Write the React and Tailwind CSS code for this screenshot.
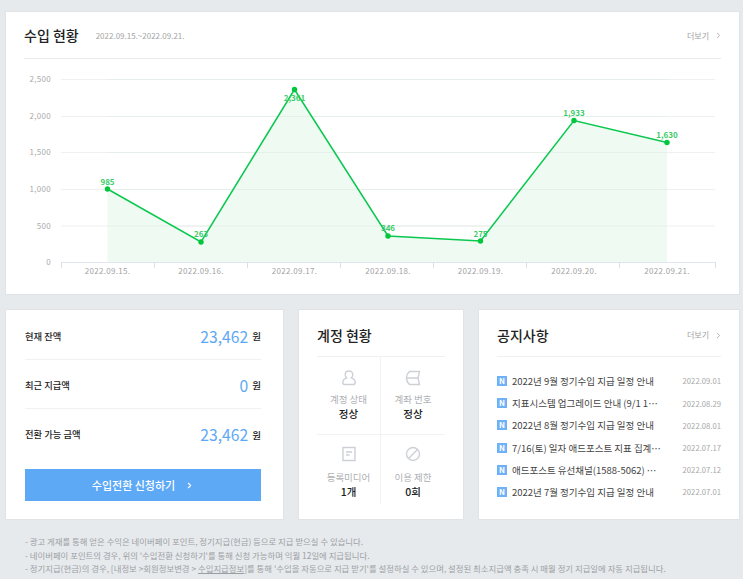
import { ChevronRight } from "lucide-react";

const font = "font-['Noto_Sans_CJK_KR','Noto_Sans',sans-serif]";

// Weekly revenue points, positions are in chart pixels
const points = [
  { x: 46.5, y: 128, label: "985", date: "2022.09.15.", ly: 124 },
  { x: 140, y: 181, label: "263", date: "2022.09.16.", ly: 176 },
  { x: 233.5, y: 28.5, label: "2,361", date: "2022.09.17.", ly: 40 },
  { x: 327, y: 175, label: "346", date: "2022.09.18.", ly: 170 },
  { x: 419.5, y: 180, label: "275", date: "2022.09.19.", ly: 176 },
  { x: 513, y: 59.5, label: "1,933", date: "2022.09.20.", ly: 55 },
  { x: 606, y: 81.5, label: "1,630", date: "2022.09.21.", ly: 77 },
];

const yTicks = [
  { y: 18, label: "2,500" },
  { y: 55, label: "2,000" },
  { y: 91, label: "1,500" },
  { y: 128, label: "1,000" },
  { y: 164.5, label: "500" },
  { y: 201, label: "0" },
];

const xTicks = [0, 93, 186, 279, 372, 465, 558, 654];

const balances = [
  { label: "현재 잔액", value: "23,462" },
  { label: "최근 지급액", value: "0" },
  { label: "전환 가능 금액", value: "23,462" },
];

const notices = [
  { title: "2022년 9월 정기수입 지급 일정 안내", date: "2022.09.01" },
  { title: "지표시스템 업그레이드 안내 (9/1 15시 ~ 17시)", date: "2022.08.29" },
  { title: "2022년 8월 정기수입 지급 일정 안내", date: "2022.08.01" },
  { title: "7/16(토) 일자 애드포스트 지표 집계 지연 안내", date: "2022.07.17" },
  { title: "애드포스트 유선채널(1588-5062) 운영 종료 안내", date: "2022.07.12" },
  { title: "2022년 7월 정기수입 지급 일정 안내", date: "2022.07.01" },
];

function RevenueChart() {
  const line = points.map((p) => `${p.x},${p.y}`).join(" ");
  const area = `46.5,201 ${line} 606,201`;
  return (
    <svg width="697" height="224" viewBox="-37 0 697 224" className="block">
      {yTicks.map((t) => (
        <g key={t.label}>
          {t.label !== "0" && (
            <line x1="0" x2="654" y1={t.y + 0.5} y2={t.y + 0.5} stroke="#eef0f2" />
          )}
          <text x="-10" y={t.y + 3} textAnchor="end" fontSize="8" fill="#aaaaaa" letterSpacing="0.3">
            {t.label}
          </text>
        </g>
      ))}
      <polygon points={area} fill="#effaf2" />
      {yTicks.slice(0, 5).map((t) => (
        <line key={t.y} x1="46.5" x2="606" y1={t.y + 0.5} y2={t.y + 0.5} stroke="#e6efe9" />
      ))}
      <line x1="0" x2="654" y1="201.5" y2="201.5" stroke="#dfe6f2" />
      {xTicks.map((x) => (
        <line key={x} x1={x + 0.5} x2={x + 0.5} y1="201" y2="207" stroke="#d9e0ec" />
      ))}
      <polyline points={line} fill="none" stroke="#0ac84f" strokeWidth="1.5" />
      {points.map((p) => (
        <g key={p.date}>
          <circle cx={p.x} cy={p.y} r="2.7" fill="#00c73c" />
          <text x={p.x} y={p.ly} textAnchor="middle" fontSize="8" fontWeight="700" fill="#3dcb6a">
            {p.label}
          </text>
          <text x={p.x} y="213" textAnchor="middle" fontSize="8" fill="#a3a3a3" letterSpacing="0.3">
            {p.date}
          </text>
        </g>
      ))}
    </svg>
  );
}

function MoreLink() {
  return (
    <div className="flex items-center gap-[5px] text-[8px] text-[#a2a2a2]">
      더보기
      <ChevronRight size={9} strokeWidth={2} className="-mr-[2px] text-[#999999]" />
    </div>
  );
}

function StatCell({ icon, label, value, className, labelGap }) {
  return (
    <div className={`flex flex-col items-center ${className}`}>
      <div className="flex h-[16px] items-center">{icon}</div>
      <div className={`${labelGap} text-[9.5px] leading-[14px] text-[#aeb0b3]`}>{label}</div>
      <div className="text-[10.5px] leading-[16px] font-medium text-[#222222]">{value}</div>
    </div>
  );
}

const iconProps = {
  width: 16,
  height: 16,
  viewBox: "0 0 16 16",
  fill: "none",
  stroke: "#cdd1d6",
  strokeWidth: 1.4,
};

export default function App() {
  return (
    <div className={`${font} h-[579px] w-[743px] overflow-hidden bg-[#e7eaed] pt-[11px] pl-[5px]`}>
      <section className="h-[284px] w-[735px] border border-[#e1e4e7] bg-white px-[18px]">
        <div className="flex h-[47px] items-center justify-between border-b border-[#e9ebee] pt-px">
          <div className="flex items-center">
            <h2 className="text-[14px] font-medium text-[#222222]">수입 현황</h2>
            <span className="ml-[17px] text-[8px] text-[#a5a5a5]">2022.09.15.~2022.09.21.</span>
          </div>
          <MoreLink />
        </div>
        <div className="mt-[2px]">
          <RevenueChart />
        </div>
      </section>

      <div className="mt-[14px] flex gap-[14px]">
        <section className="h-[211px] w-[279px] border border-[#e1e4e7] bg-white pr-[22px] pl-[19px]">
          {balances.map((b, i) => (
            <div
              key={b.label}
              className={`flex h-[49px] items-center justify-between pt-[3px] ${i < 2 ? "border-b border-[#f0f1f3]" : ""} ${i === 0 ? "mt-[1px]" : ""}`}
            >
              <span className="text-[9.3px] font-medium text-[#222222]">{b.label}</span>
              <span className="flex items-center gap-[4px]">
                <span className="text-[15.7px] text-[#5ea8f5]">{b.value}</span>
                <span className="text-[9.5px] font-medium text-[#222222]">원</span>
              </span>
            </div>
          ))}
          <div className="mt-[11px] flex h-[32px] items-center justify-center gap-[10px] bg-[#5da9f6] text-[11px] font-medium text-white">
            수입전환 신청하기
            <ChevronRight size={9} strokeWidth={3} />
          </div>
        </section>

        <section className="h-[211px] w-[166px] border border-[#e1e4e7] bg-white px-[18px]">
          <h2 className="flex h-[47px] items-center border-b border-[#eef0f2] pt-[5px] text-[14px] font-medium text-[#222222]">
            계정 현황
          </h2>
          <div className="grid h-[147px] grid-cols-2 grid-rows-[78px_69px]">
            <StatCell
              className="border-r border-b border-[#f1f2f4] pt-[13px]"
              labelGap="mt-[6px]"
              label="계정 상태"
              value="정상"
              icon={
                <svg {...iconProps}>
                  <path d="M8 1c-2.3 0-3.8 1.7-3.8 3.7 0 1.3.6 2.4 1.5 3.1C3.4 8.6 1.8 10.2 1.8 12.4c0 1.3.8 2.1 2 2.1h8.4c1.2 0 2-.8 2-2.1 0-2.2-1.6-3.8-3.9-4.6.9-.7 1.5-1.8 1.5-3.1C11.8 2.7 10.3 1 8 1z" />
                </svg>
              }
            />
            <StatCell
              className="border-b border-[#f1f2f4] pt-[13px]"
              labelGap="mt-[6px]"
              label="계좌 번호"
              value="정상"
              icon={
                <svg {...iconProps}>
                  <path d="M4.5 1.5h10L13 8l1.5 6.5h-10C2.5 12.8 1.5 10.6 1.5 8s1-4.8 3-6.5zM1.5 8H13" />
                </svg>
              }
            />
            <StatCell
              className="border-r border-[#f1f2f4] pt-[11px]"
              labelGap="mt-[8px]"
              label="등록미디어"
              value="1개"
              icon={
                <svg {...iconProps}>
                  <path d="M2 1.5h12v13H2zM5 6h6M5 9h3.5" />
                </svg>
              }
            />
            <StatCell
              className="pt-[11px]"
              labelGap="mt-[8px]"
              label="이용 제한"
              value="0회"
              icon={
                <svg {...iconProps}>
                  <circle cx="8" cy="8" r="6.5" />
                  <path d="M3.5 12.5l9-9" />
                </svg>
              }
            />
          </div>
        </section>

        <section className="h-[211px] w-[262px] border border-[#e1e4e7] bg-white px-[18px]">
          <div className="flex h-[47px] items-center justify-between border-b border-[#eef0f2] pt-[4px]">
            <h2 className="text-[14px] font-medium text-[#222222]">공지사항</h2>
            <MoreLink />
          </div>
          <ul className="mt-[13px] flex flex-col">
            {notices.map((n) => (
              <li key={n.title + n.date} className="flex h-[22.2px] items-center">
                <span className="mr-[5px] flex h-[10px] w-[10px] shrink-0 items-center justify-center bg-[#6fb1f7] text-[8px] leading-none font-bold text-white">
                  N
                </span>
                <span className="w-[149px] truncate text-[9.5px] text-[#444444]">{n.title}</span>
                <span className="ml-auto text-[7.7px] text-[#a8a8a8]">{n.date}</span>
              </li>
            ))}
          </ul>
        </section>
      </div>

      <div className="mt-[15px] pl-[20px] text-[8.4px] leading-[13.5px] text-[#9b9fa3]">
        <p>- 광고 게재를 통해 얻은 수익은 네이버페이 포인트, 정기지급(현금) 등으로 지급 받으실 수 있습니다.</p>
        <p>- 네이버페이 포인트의 경우, 위의 '수입전환 신청하기'를 통해 신청 가능하며 익월 12일에 지급됩니다.</p>
        <p className="whitespace-nowrap">
          - 정기지급(현금)의 경우, [내정보 &gt;회원정보변경 &gt; <span className="underline">수입지급정보</span>]를 통해 '수입을 자동으로 지급 받기'를 설정하실 수 있으며, 설정된 최소지급액 충족 시 매월 정기 지급일에 자동 지급됩니다.
        </p>
      </div>
    </div>
  );
}
